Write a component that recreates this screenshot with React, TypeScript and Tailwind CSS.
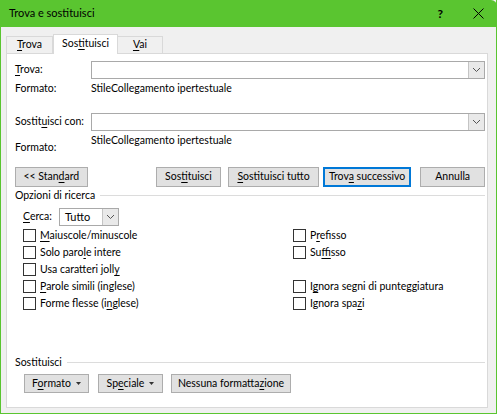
import React from 'react';

const font = { fontFamily: 'Lato, "Segoe UI", sans-serif' };

// underline the access key of a label
const U: React.FC<{ children: React.ReactNode }> = ({ children }) => (
  <span className="underline underline-offset-2">{children}</span>
);

const Chevron = () => (
  <svg width="9" height="6" viewBox="0 0 9 6" fill="none">
    <path d="M1 1l3.5 3.5L8 1" stroke="#555" strokeWidth="1" />
  </svg>
);

const Combo: React.FC<{ className?: string; value?: string }> = ({ className = '', value }) => (
  <div className={`flex h-[18px] border border-[#a9a9a9] bg-white ${className}`}>
    <div className="flex-1 pl-[5px] leading-[16px] text-[11px]">{value}</div>
    <div className="w-[16px] flex items-center justify-center bg-[#e9e9e9] border-l border-[#c4c4c4]">
      <Chevron />
    </div>
  </div>
);

const Btn: React.FC<{ children: React.ReactNode; className?: string; primary?: boolean }> = ({
  children,
  className = '',
  primary,
}) => (
  <div
    className={`flex items-center justify-center bg-[#e1e1e1] ${
      primary ? 'border-2 border-[#0078d7]' : 'border border-[#adadad]'
    } ${className}`}
  >
    <span className="whitespace-nowrap">{children}</span>
  </div>
);

const Check: React.FC<{ children: React.ReactNode }> = ({ children }) => (
  <div className="flex items-center h-[17px]">
    <div className="w-[13px] h-[13px] border border-[#333] bg-white mr-[4px]" />
    <span className="whitespace-nowrap">{children}</span>
  </div>
);

const Caret = () => (
  <svg width="5" height="3" viewBox="0 0 5 3" className="inline-block ml-[5px] align-middle">
    <path d="M0 0h5L2.5 3z" fill="#333" />
  </svg>
);

export default function App() {
  return (
    <div className="w-[500px] h-[415px] bg-white text-[10.5px] text-black" style={font}>
      <div className="w-[497px] h-[414px] flex flex-col border-x border-b border-[#5ac530] bg-[#f0f0f0]">
        {/* title bar */}
        <div className="h-[27px] -mx-px bg-[#5ac530] flex items-center pl-[9px] pr-[13px] rounded-tr-[6px]">
          <span className="flex-1 text-[11px]">Trova e sostituisci</span>
          <span className="mr-[30px] text-[12px] font-bold">?</span>
          <svg width="11" height="11" viewBox="0 0 11 11">
            <path d="M0.5 0.5l10 10M10.5 0.5l-10 10" stroke="#000" strokeWidth="1" />
          </svg>
        </div>

        {/* tabs */}
        <div className="flex items-end pl-[5px] mt-[6px] h-[20px] relative z-10">
          <div className="h-[17px] w-[47px] border border-b-0 border-[#d9d9d9] bg-[#f0f0f0] flex items-center justify-center">
            <span><U>T</U>rova</span>
          </div>
          <div className="h-[20px] w-[65px] -mb-px border border-b-0 border-[#d9d9d9] bg-white flex items-center justify-center pb-[2px]">
            <span>Sos<U>t</U>ituisci</span>
          </div>
          <div className="h-[17px] w-[45px] border border-b-0 border-l-0 border-[#d9d9d9] bg-[#f0f0f0] flex items-center justify-center">
            <span><U>V</U>ai</span>
          </div>
        </div>

        {/* panel */}
        <div className="ml-[5px] mr-[8px] h-[355px] bg-white border border-[#d9d9d9] pl-[8px] pr-[2px] pt-[7px]">
          <div className="flex items-center h-[18px]">
            <span className="w-[76px] whitespace-nowrap"><U>T</U>rova:</span>
            <Combo className="flex-1" />
          </div>
          <div className="flex h-[18px] leading-[18px]">
            <span className="w-[76px]">Formato:</span>
            <span>StileCollegamento ipertestuale</span>
          </div>

          <div className="flex items-center h-[18px] mt-[16px]">
            <span className="w-[76px] whitespace-nowrap">Sostit<U>u</U>isci con:</span>
            <Combo className="flex-1" />
          </div>
          <div className="flex h-[24px]">
            <span className="w-[76px] self-end leading-[16px]">Formato:</span>
            <span className="leading-[18px]">StileCollegamento ipertestuale</span>
          </div>

          <div className="flex mt-[12px]">
            <Btn className="h-[20px] w-[73px]">&lt;&lt; Stan<U>d</U>ard</Btn>
            <Btn className="h-[20px] w-[66px] ml-[68px]">Sos<U>t</U>ituisci</Btn>
            <Btn className="h-[20px] w-[91px] ml-[7px]"><U>S</U>ostituisci tutto</Btn>
            <Btn className="h-[20px] w-[89px] ml-[4px]" primary>Trov<U>a</U> successivo</Btn>
            <Btn className="h-[20px] w-[65px] ml-[9px]">Annulla</Btn>
          </div>

          <div className="flex items-center h-[17px]">
            <span>Opzioni di ricerca</span>
            <div className="flex-1 h-px bg-[#dcdcdc] ml-[5px]" />
          </div>

          <div className="pl-[8px]">
            <div className="flex items-center mt-[3px] h-[19px]">
              <span className="w-[36px]"><U>C</U>erca:</span>
              <Combo className="w-[60px]" value="Tutto" />
            </div>
            <div className="flex mt-[1px]">
              <div className="w-[270px]">
                <Check><U>M</U>aiuscole/minuscole</Check>
                <Check>Solo paro<U>l</U>e intere</Check>
                <Check>Usa caratteri joll<U>y</U></Check>
                <Check><U>P</U>arole simili (inglese)</Check>
                <Check>Forme flesse (i<U>n</U>glese)</Check>
              </div>
              <div>
                <Check>P<U>r</U>efisso</Check>
                <Check>Su<U>f</U>fisso</Check>
                <div className="h-[17px]" />
                <Check>I<U>g</U>nora segni di punteggiatura</Check>
                <Check>Ignora spa<U>z</U>i</Check>
              </div>
            </div>
          </div>

          <div className="flex items-center mt-[42px] h-[17px]">
            <span>Sostituisci</span>
            <div className="flex-1 h-px bg-[#dcdcdc] ml-[5px]" />
          </div>
          <div className="flex mt-[3px] pl-[9px]">
            <Btn className="h-[19px] w-[65px]">F<U>o</U>rmato<Caret /></Btn>
            <Btn className="h-[19px] w-[65px] ml-[9px]">Sp<U>e</U>ciale<Caret /></Btn>
            <Btn className="h-[19px] w-[120px] ml-[8px]">Nessuna formatta<U>z</U>ione</Btn>
          </div>
        </div>
      </div>
    </div>
  );
}
